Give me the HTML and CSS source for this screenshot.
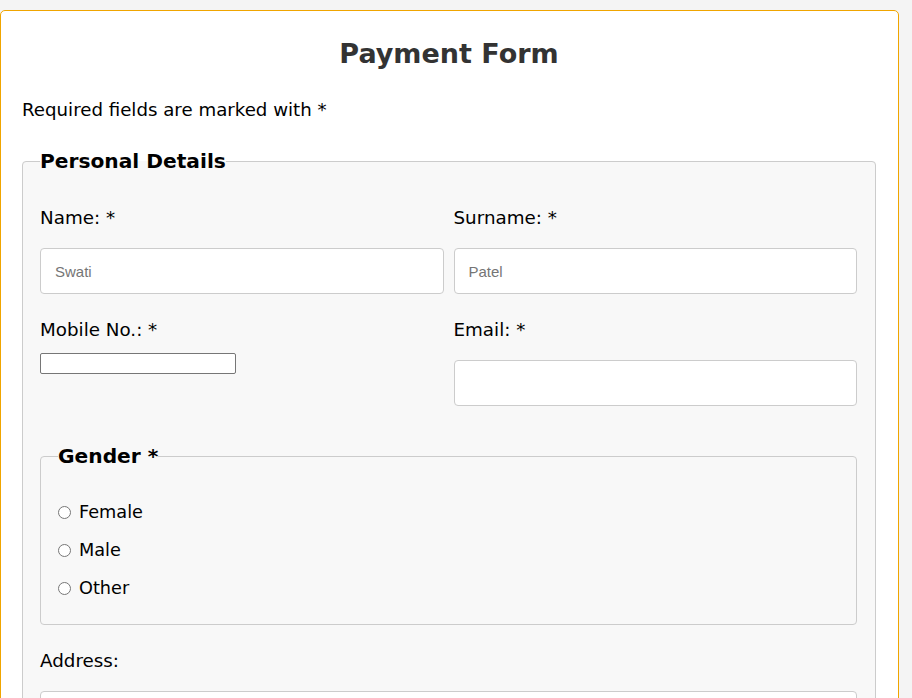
FILE: index.html
```html
<!DOCTYPE html>
<html lang="en">
<head>
<meta charset="utf-8">
<title>Payment Form</title>
<link rel="stylesheet" href="styles.css">
</head>
<body>
<div class="card">
  <h1 class="title">Payment Form</h1>
  <p class="note">Required fields are marked with *</p>
  <fieldset class="group">
    <legend class="group-legend">Personal Details</legend>
    <div class="row row-first">
      <div class="field">
        <label class="label" for="name">Name: *</label>
        <input class="input" id="name" type="text" placeholder="Swati">
      </div>
      <div class="field">
        <label class="label" for="surname">Surname: *</label>
        <input class="input" id="surname" type="text" placeholder="Patel">
      </div>
    </div>
    <div class="row">
      <div class="field">
        <label class="label" for="mobile">Mobile No.: *</label>
        <input class="plain-input" id="mobile" type="tel">
      </div>
      <div class="field">
        <label class="label" for="email">Email: *</label>
        <input class="input" id="email" type="email">
      </div>
    </div>
    <fieldset class="subgroup">
      <legend class="group-legend">Gender *</legend>
      <label class="option option-first"><input class="radio" type="radio" name="gender">Female</label>
      <label class="option"><input class="radio" type="radio" name="gender">Male</label>
      <label class="option"><input class="radio" type="radio" name="gender">Other</label>
    </fieldset>
    <div class="field">
      <label class="label" for="address">Address:</label>
      <input class="input" id="address" type="text">
    </div>
  </fieldset>
</div>
</body>
</html>
```

FILE: styles.css
```css
html, body {
  margin: 0;
  padding: 0;
}
body {
  background: #f4f4f4;
  font-family: "DejaVu Sans", Verdana, sans-serif;
  font-size: 18.3px;
  color: #000;
  padding-top: 10px;
  overflow: hidden;
}
.card {
  width: 899px;
  box-sizing: border-box;
  background: #fff;
  border: 1px solid #f0a500;
  border-radius: 5px;
  padding: 0 22px 40px 21px;
}
.title {
  margin: 0;
  padding-top: 26.5px;
  text-align: center;
  font-size: 27px;
  line-height: 31px;
  font-weight: bold;
  color: #333;
}
.note {
  margin: 30px 0 29.5px 0;
  font-size: 18.2px;
  line-height: 21px;
}
.group {
  margin: 0;
  padding: 17px 18px 17px 17px;
  border: 1px solid #ccc;
  border-radius: 4px;
  background: #f8f8f8;
  min-width: 0;
}
.group-legend {
  padding: 0;
  font-size: 20.2px;
  font-weight: bold;
  line-height: 24px;
}
.row {
  display: grid;
  grid-template-columns: 1fr 1fr;
  column-gap: 10px;
}
.row-first {
  margin-top: 16.5px;
}
.field {
  display: flex;
  flex-direction: column;
  align-items: flex-start;
  margin-bottom: 24.5px;
}
.label {
  display: block;
  line-height: 21px;
  margin-bottom: 13.5px;
}
.input {
  display: block;
  width: 100%;
  box-sizing: border-box;
  height: 46px;
  margin: 7px 0 0 0;
  padding: 0 14px;
  border: 1px solid #ccc;
  border-radius: 4px;
  background: #fff;
  font-family: "Liberation Sans", Arial, sans-serif;
  font-size: 15px;
}
.input::placeholder {
  color: #757575;
}
.plain-input {
  display: block;
  width: 196px;
  height: 21px;
  box-sizing: border-box;
  margin: 0;
  border: 1px solid #767676;
  border-radius: 2px;
  background: #fff;
}
.subgroup {
  margin: 13.5px 0 24.5px 0;
  padding: 17px;
  border: 1px solid #ccc;
  border-radius: 4px;
  background: #f8f8f8;
  min-width: 0;
}
.option {
  display: flex;
  align-items: center;
  height: 38px;
  font-size: 17.7px;
  line-height: 21px;
}
.option-first {
  margin-top: 8px;
}
.radio {
  width: 13px;
  height: 13px;
  margin: 0 8px 0 0;
}
```
